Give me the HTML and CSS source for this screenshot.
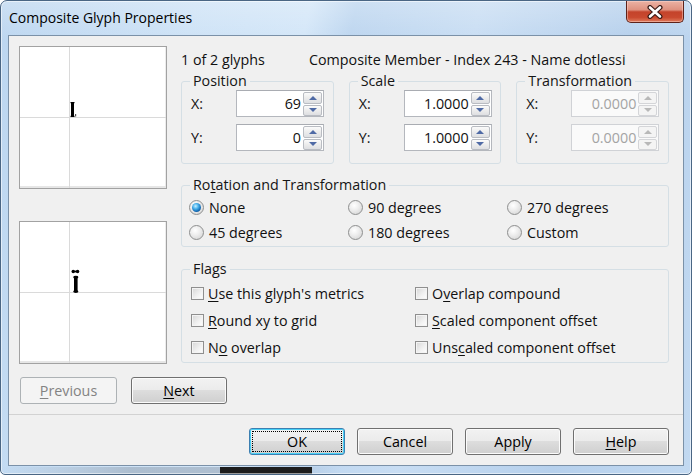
FILE: index.html
```html
<!DOCTYPE html>
<html lang="en">
<head>
<meta charset="utf-8">
<title>Composite Glyph Properties</title>
<link rel="stylesheet" href="styles.css">
</head>
<body>
<div class="window">
  <div class="titlebar">
    <div class="title">Composite Glyph Properties</div>
    <div class="close">
      <svg width="18" height="14" viewBox="0 0 18 14">
        <path d="M4 2.5 L14 11.5 M14 2.5 L4 11.5" stroke="#3a1a16" stroke-width="5" stroke-linecap="round"/>
        <path d="M4 2.5 L14 11.5 M14 2.5 L4 11.5" stroke="#ffffff" stroke-width="2.6" stroke-linecap="round"/>
      </svg>
    </div>
  </div>
  <div class="client">
    <div class="main">
      <div class="previews">
        <div class="preview">
          <svg width="146" height="141" viewBox="0 0 146 141">
            <line x1="49.5" y1="0" x2="49.5" y2="141" stroke="#dadada"/>
            <line x1="0" y1="70.5" x2="146" y2="70.5" stroke="#dadada"/>
            <rect x="51" y="55" width="3" height="15" fill="#000"/>
            <rect x="50.5" y="55" width="4" height="1.2" fill="#000"/>
            <rect x="50.5" y="68.8" width="4" height="1.2" fill="#000"/>
            <rect x="55" y="67" width="1.2" height="2.5" fill="#555"/>
          </svg>
        </div>
        <div class="preview">
          <svg width="146" height="141" viewBox="0 0 146 141">
            <line x1="49.5" y1="0" x2="49.5" y2="141" stroke="#dadada"/>
            <line x1="0" y1="70.5" x2="146" y2="70.5" stroke="#dadada"/>
            <circle cx="53.2" cy="49.5" r="1.7" fill="#000"/>
            <circle cx="57.6" cy="49.5" r="1.7" fill="#000"/>
            <rect x="53.2" y="48.6" width="4.4" height="1.8" fill="#000"/>
            <rect x="54" y="55" width="3.6" height="15" fill="#000"/>
            <ellipse cx="55.8" cy="55.2" rx="2.6" ry="1.4" fill="#000"/>
            <ellipse cx="55.8" cy="69.6" rx="2.6" ry="1.4" fill="#000"/>
          </svg>
        </div>
      </div>
      <div class="props">
        <div class="info">
          <span class="count">1 of 2 glyphs</span>
          <span class="member">Composite Member - Index 243 - Name dotlessi</span>
        </div>
        <div class="groups">
          <fieldset class="group">
            <legend>Position</legend>
            <div class="field">
              <span class="lbl">X:</span>
              <div class="spin"><span class="val">69</span><span class="arrows"><span class="arr up"></span><span class="arr down"></span></span></div>
            </div>
            <div class="field">
              <span class="lbl">Y:</span>
              <div class="spin"><span class="val">0</span><span class="arrows"><span class="arr up"></span><span class="arr down"></span></span></div>
            </div>
          </fieldset>
          <fieldset class="group">
            <legend>Scale</legend>
            <div class="field">
              <span class="lbl">X:</span>
              <div class="spin"><span class="val">1.0000</span><span class="arrows"><span class="arr up"></span><span class="arr down"></span></span></div>
            </div>
            <div class="field">
              <span class="lbl">Y:</span>
              <div class="spin"><span class="val">1.0000</span><span class="arrows"><span class="arr up"></span><span class="arr down"></span></span></div>
            </div>
          </fieldset>
          <fieldset class="group">
            <legend>Transformation</legend>
            <div class="field">
              <span class="lbl">X:</span>
              <div class="spin disabled"><span class="val">0.0000</span><span class="arrows"><span class="arr up"></span><span class="arr down"></span></span></div>
            </div>
            <div class="field">
              <span class="lbl">Y:</span>
              <div class="spin disabled"><span class="val">0.0000</span><span class="arrows"><span class="arr up"></span><span class="arr down"></span></span></div>
            </div>
          </fieldset>
        </div>
        <fieldset class="group rotation">
          <legend>Ro<u>t</u>ation and Transformation</legend>
          <div class="radios">
            <div class="opt"><span class="radio checked"></span>None</div>
            <div class="opt"><span class="radio"></span>90 degrees</div>
            <div class="opt"><span class="radio"></span>270 degrees</div>
            <div class="opt"><span class="radio"></span>45 degrees</div>
            <div class="opt"><span class="radio"></span>180 degrees</div>
            <div class="opt"><span class="radio"></span>Custom</div>
          </div>
        </fieldset>
        <fieldset class="group flags">
          <legend>Flags</legend>
          <div class="checks">
            <div class="opt"><span class="check"></span><span><u>U</u>se this glyph's metrics</span></div>
            <div class="opt"><span class="check"></span><span>O<u>v</u>erlap compound</span></div>
            <div class="opt"><span class="check"></span><span><u>R</u>ound xy to grid</span></div>
            <div class="opt"><span class="check"></span><span><u>S</u>caled component offset</span></div>
            <div class="opt"><span class="check"></span><span>N<u>o</u> overlap</span></div>
            <div class="opt"><span class="check"></span><span>Uns<u>c</u>aled component offset</span></div>
          </div>
        </fieldset>
      </div>
    </div>
    <div class="nav">
      <div class="btn disabled wide"><u>P</u>revious</div>
      <div class="btn"><u>N</u>ext</div>
    </div>
    <div class="footer">
      <div class="btn default">OK</div>
      <div class="btn">Cancel</div>
      <div class="btn">Apply</div>
      <div class="btn"><u>H</u>elp</div>
    </div>
  </div>
</div>
</body>
</html>
```
FILE: styles.css
```css
* { box-sizing: border-box; }
html, body { margin: 0; padding: 0; }
body {
  width: 692px;
  height: 475px;
  overflow: hidden;
  font-family: "Open Sans", "Noto Sans", sans-serif;
  font-size: 14.3px;
  color: #111;
  background: #ffffff;
}
u { text-decoration: underline; text-underline-offset: 2px; text-decoration-thickness: 1px; }

.window {
  width: 692px;
  height: 475px;
  border: 1px solid #4a6684;
  border-radius: 7px 7px 5px 5px;
  background:
    linear-gradient(#1d1d1d, #1d1d1d) 219px 466px / 92px 7px no-repeat,
    linear-gradient(90deg, rgba(160,172,186,0) 0, rgba(150,165,182,.6) 128px, rgba(150,165,182,.6) 219px, rgba(160,172,186,0) 340px) 0 466px / 100% 7px no-repeat,
    linear-gradient(180deg, rgba(255,255,255,.25) 0, rgba(255,255,255,0) 40px),
    linear-gradient(100deg, #bcd6f0 0%, #cde2f6 25%, #d3e6f8 40%, #bcd5ef 46%, #c8ddf3 62%, #b6d0ec 82%, #c2d9f1 100%);
  box-shadow: inset 0 0 0 1px rgba(255,255,255,.55);
  display: flex;
  flex-direction: column;
  padding: 0 7px 8px;
}

.titlebar {
  height: 34px;
  display: flex;
  align-items: flex-start;
}
.title {
  padding-left: 1px;
  line-height: 34px;
  font-size: 14px;
  color: #000;
}
.close {
  margin-left: auto;
  width: 58px;
  height: 22px;
  border: 1px solid #5e2219;
  border-top: none;
  border-radius: 0 0 5px 5px;
  background: linear-gradient(180deg, #ebb2a4 0%, #df917f 42%, #c4432b 52%, #c9492f 78%, #e07b5c 100%);
  box-shadow: inset 0 0 0 1px rgba(255,220,210,.45);
  display: flex;
  align-items: center;
  justify-content: center;
}
.close svg { display: block; }

.client {
  flex: 1;
  background: #f0f0f0;
  border: 1px solid #7b91a8;
  display: flex;
  flex-direction: column;
}

.main {
  display: flex;
  padding: 10px 14px 0 10px;
  gap: 14px;
}
.previews {
  width: 148px;
  display: flex;
  flex-direction: column;
  gap: 32px;
}
.preview {
  width: 148px;
  height: 143px;
  background: #fff;
  border: 1px solid #a2a2a2;
  box-shadow: inset 0 -2px 0 #e6e6e6, inset -1px 0 0 #ececec;
}
.preview svg { display: block; }

.props {
  flex: 1;
  display: flex;
  flex-direction: column;
}
.info {
  margin-top: 4px;
  height: 20px;
  line-height: 20px;
  display: flex;
  white-space: nowrap;
}
.count { width: 128px; }

fieldset.group {
  margin: 0;
  border: 1px solid #d5dfe5;
  border-radius: 3px;
  padding: 0 8px 12px;
  min-width: 0;
}
fieldset.group legend {
  padding: 0 3px;
  line-height: 18px;
  color: #151515;
}

.groups {
  margin-top: 2px;
  display: grid;
  grid-template-columns: repeat(3, 1fr);
  column-gap: 15px;
}
.field {
  display: flex;
  align-items: center;
  height: 27px;
}
.field + .field { margin-top: 7px; }
.lbl {
  width: 46px;
  padding-left: 1px;
}
.spin {
  width: 88px;
  height: 27px;
  border: 1px solid #b4b7bd;
  border-top-color: #a9acb2;
  background: #fff;
  display: flex;
}
.val {
  flex: 1;
  text-align: right;
  line-height: 25px;
  padding-right: 2px;
}
.arrows {
  width: 20px;
  padding: 1px 1px 0 0;
  display: flex;
  flex-direction: column;
  gap: 1px;
}
.arr {
  flex: 1;
  border: 1px solid #b9bcc2;
  border-radius: 2px;
  background: linear-gradient(180deg, #fbfbfb 0%, #ececec 50%, #dedfe2 100%);
  display: flex;
  align-items: center;
  justify-content: center;
}
.arr::after {
  content: "";
  width: 0;
  height: 0;
  border-left: 4px solid transparent;
  border-right: 4px solid transparent;
}
.arr.up::after { border-bottom: 4px solid #4f6aa5; }
.arr.down::after { border-top: 4px solid #4f6aa5; }

.spin.disabled {
  border-color: #d0d2d6;
  background: #fafafa;
}
.spin.disabled .val { color: #a4a4a4; }
.spin.disabled .arr {
  border-color: #d4d5d8;
  background: #f4f4f4;
}
.spin.disabled .arr.up::after { border-bottom-color: #b8b8b8; }
.spin.disabled .arr.down::after { border-top-color: #b8b8b8; }

fieldset.rotation {
  margin-top: 12px;
  padding-top: 1px;
  padding-bottom: 1px;
}
.radios {
  margin-left: -1px;
  display: grid;
  grid-template-columns: 159px 159px 1fr;
  grid-auto-rows: 25px;
}
.opt {
  display: flex;
  align-items: center;
  white-space: nowrap;
}
.radio {
  width: 15px;
  height: 15px;
  margin-right: 5px;
  border-radius: 50%;
  border: 1px solid #8e8f8f;
  background: radial-gradient(circle at 40% 35%, #ffffff 0%, #eeeeee 40%, #cfcfcf 100%);
  display: flex;
  align-items: center;
  justify-content: center;
  flex: none;
}
.radio.checked::after {
  content: "";
  width: 9px;
  height: 9px;
  border-radius: 50%;
  background: radial-gradient(circle at 40% 35%, #c9efff 0%, #46b0ea 35%, #156bb5 65%, #0c3a6b 100%);
}

fieldset.flags {
  margin-top: 13px;
  padding-top: 2px;
  padding-bottom: 1px;
}
.checks {
  margin-left: 1px;
  display: grid;
  grid-template-columns: 224px 1fr;
  grid-auto-rows: 27px;
}
.check {
  width: 13px;
  height: 13px;
  margin-right: 4px;
  border: 1px solid #8f8f8f;
  background: linear-gradient(135deg, #d6d6d6 0%, #f2f2f2 60%, #ffffff 100%);
  box-shadow: inset 0 0 0 1px #f4f4f4;
  flex: none;
}

.nav {
  display: flex;
  gap: 14px;
  padding: 13px 0 10px 11px;
  border-bottom: 1px solid #d2d2d2;
}
.footer {
  display: flex;
  justify-content: flex-end;
  gap: 12px;
  padding: 13px 14px 10px 0;
}
.btn {
  width: 96px;
  height: 27px;
  border: 1px solid #707070;
  border-radius: 3px;
  background: linear-gradient(180deg, #f2f2f2 0%, #ebebeb 49%, #dddddd 50%, #cfcfcf 100%);
  box-shadow: inset 0 0 0 1px #fbfbfb;
  text-align: center;
  line-height: 25px;
  color: #000;
}
.btn.wide { width: 97px; }
.btn.disabled {
  border-color: #adb2b5;
  background: #f4f4f4;
  box-shadow: none;
  color: #838383;
}
.btn.default {
  border-color: #3c7fb1;
  box-shadow: inset 0 0 0 1px #48d1f7;
  outline: 1px dotted #000;
  outline-offset: -4px;
}
```
